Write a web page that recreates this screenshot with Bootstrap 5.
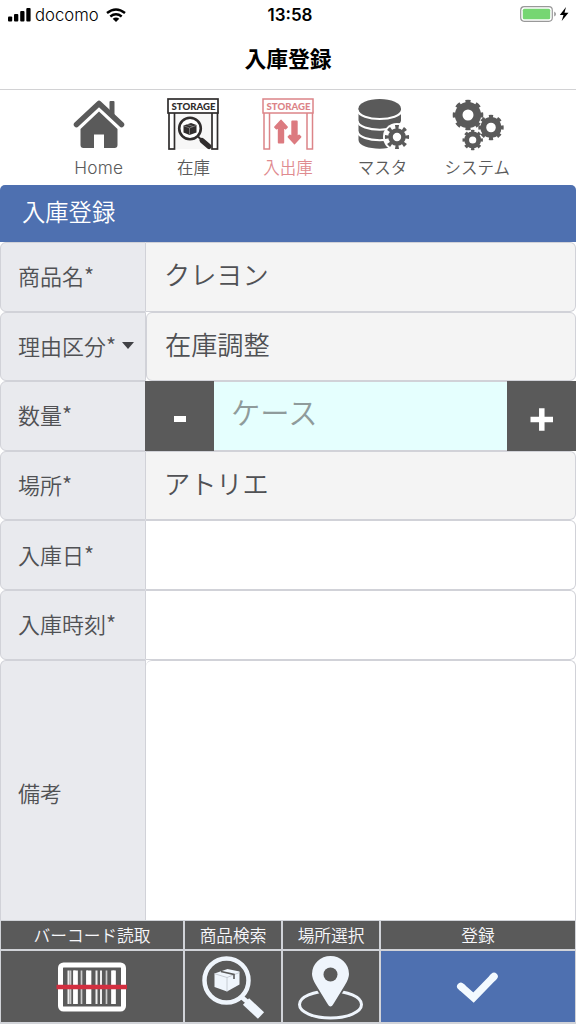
<!DOCTYPE html>
<html lang="ja">
<head>
<meta charset="utf-8">
<meta name="viewport" content="width=device-width, initial-scale=1">
<title>入庫登録</title>
<link href="https://cdn.jsdelivr.net/npm/bootstrap@5.3.0/dist/css/bootstrap.min.css" rel="stylesheet">
<style>
  body { font-family: Inter, "Noto Sans CJK JP", sans-serif; font-weight: 350; color: #505154; background: #fff; }
  .app { height: 1024px; overflow: hidden; }
  svg { display: block; flex: none; }
  .status-bar { height: 30px; color: #000; font-size: 16px; line-height: 30px; font-weight: 400; padding: 0 6px 0 8px; }
  .carrier { font-size: 16.7px; letter-spacing: 0; margin-left: 4px; margin-right: 7px; font-weight: 350; }
  .clock { font-weight: 600; font-size: 17px; padding-left: 2px; }
  .title-bar { height: 60px; border-bottom: 1px solid #d2d2d4; color: #000; font-size: 21.8px; font-weight: 700; line-height: 58px; }
  .tabs { height: 95px; width: 473px; padding-top: 7px; }
  .tabs .nav-link { padding: 0; color: #5a5a5a; font-size: 16.5px; line-height: 29px; }
  .tabs .nav-link.active { color: #df8b8f; }
  .tabs .latin { font-size: 17.3px; letter-spacing: .2px; line-height: 28px; }
  .section-head { height: 57px; background: #4e70b0; color: #fff; font-size: 23.3px; line-height: 56px; padding-left: 22px; border-radius: 5px 5px 0 0; font-weight: 350; }
  .field { height: 69.6px; flex: none; }
  .field .input-group-text { font-family: "Noto Sans CJK JP", sans-serif; width: 146px; background: #e9eaee; border: 1.5px solid #d1d2d8; border-right-width: 1px; color: #505154; font-size: 22px; font-weight: 350; padding: 0 0 2px 17px; border-radius: 6px 0 0 6px; }
  .field .form-control { border: 1.5px solid #d1d2d8; border-left: 0; margin-left: 0 !important; background: #f4f4f4; color: #505154; font-size: 26.2px; font-weight: 350; line-height: 65px; padding: 0 18px; border-radius: 0 6px 6px 0; }
  .field .form-control.open { background: #fff; }
  .field .form-control.reason { border-left: 1.5px solid #d1d2d8; border-radius: 6px !important; }
  .field .form-control.qty { background: #e5fffe; color: #8f9b9b; border-radius: 0; font-size: 29.3px; line-height: 63px; border-right: 0; padding-left: 17px; }
  .field .step-btn { width: 69px; background: #5a5a5a; border: 0; border-radius: 0 !important; padding: 0; display: flex; align-items: center; justify-content: center; }
  .memo { height: 260.4px; }
  .memo .input-group-text { border-bottom: 0; border-bottom-left-radius: 0; padding-top: 7px; }
  .memo .form-control { border-bottom: 0; border-radius: 6px 6px 0 0 !important; }
  .caret-down { border: 6.5px solid transparent; border-top: 7px solid #404145; border-bottom: 0; margin-left: 6px; }
  .actions { display: grid; grid-template-columns: 182px 96px 96px 1fr; grid-template-rows: 28px 71px; gap: 2px; padding: 1px; background: #d1d3d8; height: 104px; }
  .actions > div { background: #5a5a5a; display: flex; justify-content: center; align-items: center; color: #f7f7fa; font-size: 16.7px; line-height: 28px; padding-top: 2px; overflow: hidden; }
  .actions > .submit { background: #4e70b0; }
</style>
</head>
<body>
<div class="app d-flex flex-column">
  <header class="flex-shrink-0">
    <div class="status-bar row g-0">
      <div class="col d-flex align-items-center">
        <svg width="23" height="14" viewBox="0 0 23 14"><g fill="#000"><rect x="0" y="8.5" width="4.2" height="5" rx="1"/><rect x="6" y="6" width="4.3" height="7.5" rx="1"/><rect x="12.2" y="3" width="4.3" height="10.5" rx="1"/><rect x="18.3" y="0" width="4.3" height="13.5" rx="1"/></g></svg>
        <span class="carrier">docomo</span>
        <svg width="20" height="14" viewBox="0 0 20 14"><g fill="none" stroke="#000" stroke-width="2.5"><path d="M1 5Q10-2 19 5M4.3 8.4Q10 4 15.7 8.4"/></g><path d="M6.7 10.7Q10 8.3 13.3 10.7L10 14Z"/></svg>
      </div>
      <div class="col-auto clock">13:58</div>
      <div class="col d-flex align-items-center justify-content-end">
        <svg width="50" height="18" viewBox="0 0 50 18"><rect x=".7" y=".7" width="31.6" height="14.6" rx="3.5" fill="#fff" stroke="#999" stroke-width="1.2"/><rect x="2.8" y="2.8" width="27.4" height="10.4" rx="1.5" fill="#76d672"/><path d="M34.2 5.5Q36 6.5 36 8T34.2 10.5Z" fill="#999"/><path d="M46 1 39.800 9H43.500L41.700 15 48.500 6.800H44.500Z"/></svg>
      </div>
    </div>
    <h1 class="title-bar text-center m-0">入庫登録</h1>
  </header>

  <nav class="tabs nav nav-justified mx-auto flex-nowrap flex-shrink-0">
    <a class="nav-link nav-item d-flex flex-column align-items-center" href="#">
      <svg width="54" height="57" viewBox="0 0 54 57"><path d="M8.500 32 27 14.500 45.500 32V48q0 3-3 3H32V37.500H22V51H11.500q-3 0-3-3Z" fill="#5a5a5a"/><path d="M4.500 27 27 6.500 49.500 27" fill="none" stroke="#fff" stroke-width="10"/><path d="M4.500 27.500 27 6.500 49.500 27.500" fill="none" stroke="#5a5a5a" stroke-width="5.500" stroke-linecap="round" stroke-linejoin="round"/><path d="M37.500 5q0-1 1-1h3q1 0 1 1V20L37.500 16Z" fill="#5a5a5a"/></svg>
      <span class="latin">Home</span>
    </a>
    <a class="nav-link nav-item d-flex flex-column align-items-center" href="#">
      <svg width="54" height="57" viewBox="0 0 54 57"><path d="M10 17H45V52H10Z" fill="#f7f7f7"/><g fill="#fff" stroke="#302d2d" stroke-width="1.700"><rect x="3" y="15" width="5.500" height="37"/><rect x="46" y="15" width="5.500" height="37"/><rect x="2" y="2" width="50" height="14"/></g><text x="5.500" y="12.700" textLength="44" lengthAdjust="spacingAndGlyphs" font-family="Lato" font-size="9.800" font-weight="900" fill="#302d2d">STORAGE</text><circle cx="24" cy="31.500" r="10.800" fill="#fff" stroke="#302d2d" stroke-width="2.600"/><path d="M32 39.500 36 43.500" stroke="#302d2d" stroke-width="2"/><path d="M36 43.500 43 49.500" stroke="#302d2d" stroke-width="5" stroke-linecap="round"/><path d="M17.500 28.500 25 26 30.500 28V35.500L23.500 38 17.500 35.500Z" fill="#302d2d"/><path d="M18 28.800 23.500 31 30 28.500M23.500 31V37.500M21 27.400 27 29.500" stroke="#aaa" stroke-width=".6" fill="none"/></svg>
      <span>在庫</span>
    </a>
    <a class="nav-link nav-item active d-flex flex-column align-items-center" href="#">
      <svg width="54" height="57" viewBox="0 0 54 57"><g fill="#fff" stroke="#dc8488" stroke-width="1.500"><rect x="3" y="15" width="5.500" height="37"/><rect x="46" y="15" width="5.500" height="37"/><rect x="2" y="2" width="50" height="14"/></g><text x="5.500" y="12.700" textLength="44" lengthAdjust="spacingAndGlyphs" font-family="Lato" font-size="9.800" font-weight="900" fill="#dc8488">STORAGE</text><path d="M20 23.500 26 30 24.500 31.500 22.300 29.700V45.500H17.700V29.700L15.500 31.500 14 30ZM33.500 46.500 27.500 40 29 38.500 31.200 40.300V24.500H35.800V40.300L38 38.500 39.500 40Z" fill="#dc7b80" stroke="#dc7b80" stroke-width="1.800" stroke-linejoin="round"/></svg>
      <span>入出庫</span>
    </a>
    <a class="nav-link nav-item d-flex flex-column align-items-center" href="#">
      <svg width="54" height="57" viewBox="0 0 54 57"><path d="M2.500 11.500V43C2.500 54.500 45 54.500 45 43V11.500Z" fill="#5a5a5a"/><ellipse cx="23.700" cy="11.500" rx="21.200" ry="9.500" fill="#5a5a5a"/><path d="M1.500 13C3.500 25 44 25 46 13M1.500 24C3.500 35.500 44 35.500 46 24M1.500 34.500C3.500 46 44 46 46 34.500" fill="none" stroke="#fff" stroke-width="2"/><circle cx="41" cy="40" r="14" fill="#fff"/><circle cx="41" cy="40" r="6.500" fill="none" stroke="#5a5a5a" stroke-width="4.600"/><circle cx="41" cy="40" r="10" fill="none" stroke="#5a5a5a" stroke-width="4.200" pathLength="80" stroke-dasharray="4.400 5.600" stroke-dashoffset="2.200"/></svg>
      <span>マスタ</span>
    </a>
    <a class="nav-link nav-item d-flex flex-column align-items-center" href="#">
      <svg width="54" height="57" viewBox="0 0 54 57"><g fill="none" stroke="#5a5a5a"><circle cx="18" cy="18" r="9.300" stroke-width="7.600"/><circle cx="18" cy="18" r="13" stroke-width="4.600" pathLength="80" stroke-dasharray="4.800 5.200" stroke-dashoffset="2.400"/><circle cx="41" cy="30.500" r="7.700" stroke-width="5.800"/><circle cx="41" cy="30.500" r="10.700" stroke-width="4" pathLength="80" stroke-dasharray="4.800 5.200" stroke-dashoffset="2.400"/><circle cx="22.700" cy="43" r="6" stroke-width="4.800"/><circle cx="22.700" cy="43" r="8.500" stroke-width="3.400" pathLength="80" stroke-dasharray="4.800 5.200" stroke-dashoffset="2.400"/></g></svg>
      <span>システム</span>
    </a>
  </nav>

  <main class="d-flex flex-column flex-shrink-0">
    <h2 class="section-head m-0 flex-shrink-0">入庫登録</h2>
    <div class="input-group flex-nowrap field"><span class="input-group-text">商品名*</span><div class="form-control">クレヨン</div></div>
    <div class="input-group flex-nowrap field"><span class="input-group-text">理由区分*<span class="caret-down"></span></span><div class="form-control reason">在庫調整</div></div>
    <div class="input-group flex-nowrap field"><span class="input-group-text">数量*</span>
      <button class="btn step-btn" type="button" aria-label="減らす"><svg width="40" height="40" viewBox="0 0 40 40"><path d="M14 20H26V26H14Z" fill="#fff"/></svg></button>
      <div class="form-control qty">ケース</div>
      <button class="btn step-btn" type="button" aria-label="増やす"><svg width="40" height="40" viewBox="0 0 40 40"><path d="M8.500 23.500H31M19.800 12.300V34.800" stroke="#fff" stroke-width="5.500"/></svg></button>
    </div>
    <div class="input-group flex-nowrap field"><span class="input-group-text">場所*</span><div class="form-control">アトリエ</div></div>
    <div class="input-group flex-nowrap field"><span class="input-group-text">入庫日*</span><div class="form-control open"></div></div>
    <div class="input-group flex-nowrap field"><span class="input-group-text">入庫時刻*</span><div class="form-control open"></div></div>
    <div class="input-group flex-nowrap field memo"><span class="input-group-text">備考</span><div class="form-control open"></div></div>
  </main>

  <footer class="actions flex-shrink-0">
    <div>バーコード読取</div><div>商品検索</div><div>場所選択</div><div>登録</div>
    <div>
      <svg width="72" height="52" viewBox="0 0 72 52"><rect x="4.500" y="4" width="63" height="44" rx="3" fill="none" stroke="#fff" stroke-width="5"/><path d="M12.500 9.500V43M18.500 9.500V43M31 9.500V43M40.500 9.500V43M45 9.500V43M57.500 9.500V43" stroke="#eee" stroke-width="2"/><path d="M19.500 9.500V43M33 9.500V43M57.500 9.500V43" stroke="#fff" stroke-width="4.700"/><path d="M14.500 9.500V43M25.500 9.500V43M50.500 9.500V43" stroke="#ccc" stroke-width="1.700"/><path d="M.5 26H71" stroke="#d32f40" stroke-width="4.500"/></svg>
    </div>
    <div>
      <svg width="96" height="69" viewBox="0 1 96 69"><circle cx="41.500" cy="28.500" r="22" fill="none" stroke="#eff5fc" stroke-width="4.500"/><path d="M56.500 45 62.500 50" stroke="#eff5fc" stroke-width="4.500"/><path d="M61 49.500 76 63.500" stroke="#eff5fc" stroke-width="9"/><path d="M29.500 21.500 42.500 17 54.500 19.500V32.500L42 39.500 29.500 35Z" fill="#eff5fc"/><path d="M29.500 21.700 42 25.500 54.500 20.500M42 25.500V39.500" fill="none" stroke="#bcc2c9" stroke-width=".8"/><path d="M36 19.500 49 22.500V27" fill="none" stroke="#5a5a5a" stroke-width="1.600"/></svg>
    </div>
    <div>
      <svg width="96" height="69" viewBox="0 1 96 69"><ellipse cx="47.500" cy="52.500" rx="31" ry="13.500" fill="none" stroke="#eff5fc" stroke-width="3"/><path d="M33 36.500H62L53 51H42Z" fill="#5a5a5a"/><path d="M47.500 54.500Q46 54.500 44 51L33 33Q29 26.500 29 22A18.500 18 0 0 1 66 22Q66 26.500 62 33L51 51Q49 54.500 47.500 54.500Z" fill="#eff5fc"/><circle cx="47.500" cy="22.500" r="7" fill="#5a5a5a"/></svg>
    </div>
    <div class="submit">
      <svg width="44" height="36" viewBox="0 0 44 36"><path d="M5.500 18 17.500 28.500 37.500 8" fill="none" stroke="#f3faff" stroke-width="7.500"/><path d="M4.800 17.400 6 18.400M36.800 8.700 38 7.500" stroke="#f3faff" stroke-width="7.500" stroke-linecap="round"/></svg>
    </div>
  </footer>
</div>
<script src="https://cdn.jsdelivr.net/npm/bootstrap@5.3.0/dist/js/bootstrap.bundle.min.js"></script>
</body>
</html>
